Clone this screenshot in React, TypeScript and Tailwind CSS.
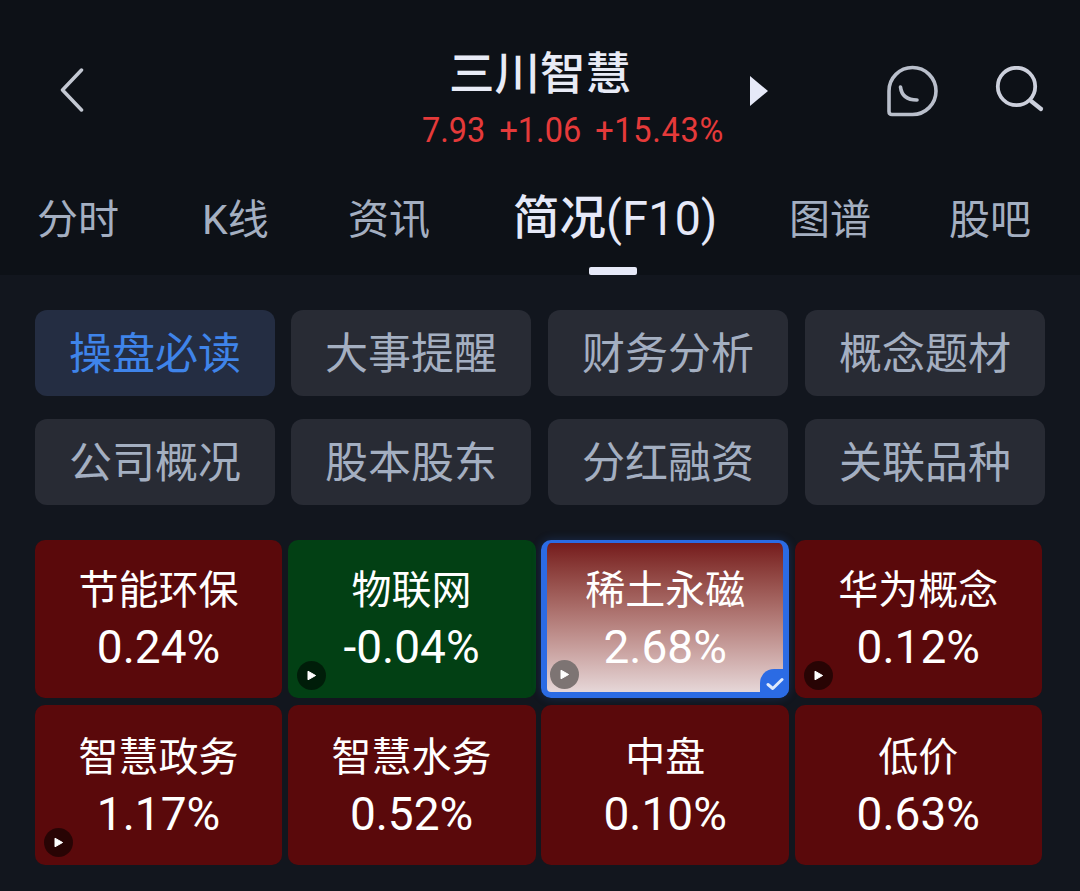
import React from 'react';

const cjk = '[font-family:Roboto,"Noto_Sans_CJK_SC",sans-serif]';

const tabs = [
  { label: '分时', width: 'w-[165px]' },
  { label: 'K线', width: 'w-[146px]' },
  { label: '资讯', width: 'w-[165px]' },
];

const buttons = ['操盘必读', '大事提醒', '财务分析', '概念题材', '公司概况', '股本股东', '分红融资', '关联品种'];

type Concept = {
  name: string;
  pct: string;
  color: 'red' | 'green' | 'selected';
  video?: boolean;
};

const concepts: Concept[] = [
  { name: '节能环保', pct: '0.24%', color: 'red' },
  { name: '物联网', pct: '-0.04%', color: 'green', video: true },
  { name: '稀土永磁', pct: '2.68%', color: 'selected', video: true },
  { name: '华为概念', pct: '0.12%', color: 'red', video: true },
  { name: '智慧政务', pct: '1.17%', color: 'red', video: true },
  { name: '智慧水务', pct: '0.52%', color: 'red' },
  { name: '中盘', pct: '0.10%', color: 'red' },
  { name: '低价', pct: '0.63%', color: 'red' },
];

const PlayBadge = ({ light }: { light?: boolean }) => (
  <span
    className={`absolute flex h-[29px] w-[29px] items-center justify-center rounded-full ${
      light ? 'left-[3px] bottom-[3px] bg-[#7d7473]' : 'left-[9px] bottom-[8px] bg-black/55'
    }`}
  >
    <svg width="11" height="11" viewBox="0 0 11 11">
      <path d="M2 1.2 L9.6 5.5 L2 9.8 Z" fill="#fff" stroke="#fff" strokeWidth="1" strokeLinejoin="round" />
    </svg>
  </span>
);

const ConceptCard = ({ item, lower }: { item: Concept; lower: boolean }) => {
  const selected = item.color === 'selected';
  const bg = item.color === 'green' ? 'bg-[#024014]' : 'bg-[#5a090b]';
  return (
    <div
      className={`relative flex flex-col items-center rounded-[10px] text-white ${
        selected
          ? 'border-[6px] border-t-[3px] border-[#2b6be4] bg-gradient-to-b from-[#751a1c] to-[#e6d7d8] pt-[28px] shadow-[0_0_10px_rgba(43,107,228,0.25)]'
          : `${bg} ${lower ? 'pt-[33px]' : 'pt-[31px]'}`
      }`}
    >
      <span className="text-[40px] leading-[40px]">{item.name}</span>
      <span className="mt-[13px] text-[46px] leading-[46px]">{item.pct}</span>
      {item.video && <PlayBadge light={selected} />}
      {selected && (
        <span className="absolute -right-[6px] -bottom-[6px] flex h-[29px] w-[29px] items-center justify-center rounded-tl-[14px] rounded-br-[10px] bg-[#2b6be4]">
          <svg width="18" height="14" viewBox="0 0 18 14" fill="none">
            <path d="M2 7.5 L6.8 11.5 L16 2.5" stroke="#dfe9fb" strokeWidth="3" strokeLinecap="round" strokeLinejoin="round" />
          </svg>
        </span>
      )}
    </div>
  );
};

export default function App() {
  return (
    <div className={`h-[891px] w-[1080px] overflow-hidden bg-[#12161e] ${cjk}`}>
      {/* top header */}
      <div className="h-[275px] bg-[#0d1117]">
        <div className="flex h-[174px] items-start">
          <div className="ml-[60px] mt-[68px] w-[24px]">
            <svg width="24" height="44" viewBox="0 0 24 44" fill="none">
              <path d="M21.5 2 L2.5 22 L21.5 42" stroke="#c3c8d2" strokeWidth="3.5" strokeLinecap="round" strokeLinejoin="round" />
            </svg>
          </div>
          <div className="ml-[338px] mt-[50px] flex w-[302px] flex-col items-start">
            <span className="ml-[27px] text-[45.5px] leading-[50px] font-medium text-[#e8ebf6]">三川智慧</span>
            <span className="mt-[10px] flex scale-y-110 gap-[14px] whitespace-nowrap text-[32.5px] leading-[40px] text-[#e53a3a]">
              <span>7.93</span>
              <span>+1.06</span>
              <span className="tracking-[0.7px]">+15.43%</span>
            </span>
          </div>
          <svg className="ml-[26px] mt-[76px]" width="18" height="30" viewBox="0 0 18 30">
            <path d="M0 0 L18 15 L0 30 Z" fill="#e6e9f8" />
          </svg>
          <svg className="ml-[118px] mt-[64px]" width="52" height="53" viewBox="0 0 52 53" fill="none">
            <path
              d="M3 27 A23.5 23.5 0 1 1 26.5 50.5 L6 50.5 Q3 50.5 3 47.5 Z"
              stroke="#b9bfcb"
              strokeWidth="3.6"
              strokeLinejoin="round"
            />
            <path d="M14.5 23 Q16 36 31 36" stroke="#b9bfcb" strokeWidth="3.6" strokeLinecap="round" />
          </svg>
          <svg className="ml-[57px] mt-[66px]" width="50" height="48" viewBox="0 0 50 48" fill="none">
            <circle cx="21.5" cy="20.5" r="18.7" stroke="#ccd0dc" strokeWidth="3.8" />
            <path d="M36 35 L46 43" stroke="#ccd0dc" strokeWidth="4.2" strokeLinecap="round" />
          </svg>
        </div>
        {/* tabs */}
        <div className="flex h-[101px] items-start pl-[37px] text-[41px] leading-[90px] text-[#a4afc1]">
          {tabs.map(tab => (
            <span key={tab.label} className={`${tab.width} mt-[1px] whitespace-nowrap`}>
              {tab.label}
            </span>
          ))}
          <div className="relative mt-[-1px] w-[276px] whitespace-nowrap text-[46.5px] text-[#e6e9f8]">
            <span className="font-medium">简况</span>
            <span className="inline-block scale-y-105 tracking-[0.3px]">(F10)</span>
            <span className="absolute left-[76px] top-[94px] h-[8px] w-[48px] rounded-[2px] bg-[#e6e9f8]" />
          </div>
          <span className="mt-[1px] w-[160px] whitespace-nowrap">图谱</span>
          <span className="mt-[1px] whitespace-nowrap">股吧</span>
        </div>
      </div>

      {/* sub menu */}
      <div className="ml-[35px] mt-[35px] grid w-[1010px] grid-cols-[256px_257px_257px_240px] gap-y-[23px]">
        {buttons.map((label, i) => (
          <div
            key={label}
            className={`flex h-[86px] w-[240px] items-center justify-center rounded-[12px] pt-[2px] text-[43px] ${
              i === 0 ? 'bg-[#242d42] text-[#3f84ea]' : 'bg-[#282b34] text-[#a4afc1]'
            }`}
          >
            {label}
          </div>
        ))}
      </div>

      {/* concept cards */}
      <div className="ml-[35px] mt-[35px] grid w-[1007px] grid-cols-[247px_248px_248px_247px] grid-rows-[158px_160px] gap-x-[5.6px] gap-y-[7px]">
        {concepts.map((item, i) => (
          <ConceptCard key={item.name} item={item} lower={i > 3} />
        ))}
      </div>
    </div>
  );
}
